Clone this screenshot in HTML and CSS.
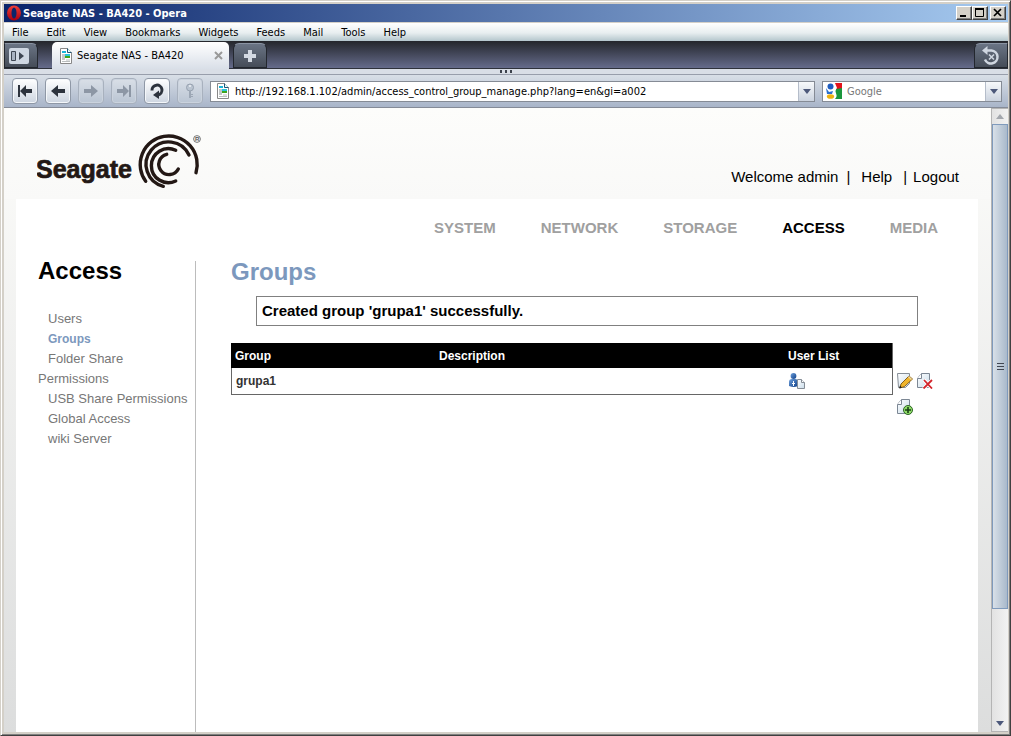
FILE: index.html
```html
<!DOCTYPE html>
<html lang="en">
<head>
<meta charset="utf-8">
<title>Seagate NAS - BA420</title>
<link rel="stylesheet" href="styles.css">
</head>
<body>
<svg class="defs" aria-hidden="true">
  <defs>
    <linearGradient id="doc-fill" x1="0" y1="0" x2="1" y2="1"><stop offset="0" stop-color="#fff"/><stop offset="1" stop-color="#c9dcea"/></linearGradient>
    <linearGradient id="blue-fill" x1="0" y1="0" x2="1" y2="1"><stop offset="0" stop-color="#6fa0dc"/><stop offset="1" stop-color="#0e3f88"/></linearGradient>
    <linearGradient id="red-fill" x1="0" y1="0" x2="0" y2="1"><stop offset="0" stop-color="#f04038"/><stop offset="1" stop-color="#a80010"/></linearGradient>
    <symbol id="page-icon" viewBox="0 0 14 16">
      <path d="M1.500.5h7l4 4v11h-11z" fill="#fff" stroke="#888"/>
      <path d="M8.500.5v4h4" fill="#dff" stroke="#257"/>
      <path d="M3 3h4v2H3z" fill="#19b5d8"/><path d="M3 6h3v6H3z" fill="#c4c8c8"/>
      <path d="M6 6h5v2H6z" fill="#25c5dc"/><path d="M6 8h5v2H6z" fill="#3fa51c"/>
      <path d="M7 12h4M3 13.500h8" stroke="#b9bdbd"/>
    </symbol>
    <symbol id="sheet" viewBox="0 0 16 16">
      <path d="M4.500.5h8v14h-12v-9z" fill="url(#doc-fill)" stroke="#7c8794"/>
      <path d="M4.500.5v5h-4" fill="#fff" stroke="#7c8794"/>
    </symbol>
  </defs>
</svg>
<div class="window">
  <header class="titlebar">
    <svg class="opera" viewBox="0 0 16 16" aria-hidden="true"><ellipse cx="8" cy="8" rx="7" ry="7.500" fill="url(#red-fill)"/><ellipse cx="8" cy="8" rx="2.500" ry="5.500" fill="#0b256b"/></svg>
    <span class="window-title">Seagate NAS - BA420 - Opera</span>
    <div class="window-buttons">
      <button type="button" aria-label="Minimize"><svg viewBox="0 0 12 10"><path d="M2 8h6" stroke="#000" stroke-width="2"/></svg></button>
      <button type="button" aria-label="Maximize"><svg viewBox="0 0 12 10"><path d="M1.500 1v7.500h8V1" fill="none" stroke="#000"/><path d="M1 1h9" stroke="#000" stroke-width="2"/></svg></button>
      <button type="button" class="close" aria-label="Close"><svg viewBox="0 0 12 10"><path d="M2 1l7 7M9 1L2 8" stroke="#000" stroke-width="1.700"/></svg></button>
    </div>
  </header>
  <nav class="menubar" aria-label="Application menu">
    <button type="button">File</button><button type="button">Edit</button><button type="button">View</button><button type="button">Bookmarks</button><button type="button">Widgets</button><button type="button">Feeds</button><button type="button">Mail</button><button type="button">Tools</button><button type="button">Help</button>
  </nav>
  <div class="tabbar">
    <button type="button" class="dark-tab panel-toggle" aria-label="Panels"><svg viewBox="0 0 20 16"><rect width="20" height="16" rx="2" fill="#cfd7e2"/><path d="M2.500 3.500h4v9h-4z" fill="#a9b3c2" stroke="#3e4652"/><path d="M10 4l5 4-5 4z" fill="#3e4652"/></svg></button>
    <div class="tab">
      <svg class="page-icon" aria-hidden="true"><use href="#page-icon"/></svg>
      <span>Seagate NAS - BA420</span>
      <button type="button" aria-label="Close tab"><svg viewBox="0 0 9 9"><path d="M1 1l7 7M8 1L1 8" stroke="#999" stroke-width="2"/></svg></button>
    </div>
    <button type="button" class="dark-tab new-tab" aria-label="New tab"><svg viewBox="0 0 14 14"><path d="M7 1v12M1 7h12" stroke="#d3d9e2" stroke-width="4"/></svg></button>
    <button type="button" class="dark-tab trash" aria-label="Closed tabs"><svg viewBox="0 0 20 20"><path d="M6 4.500h4.500a6.500 6.500 0 1 1-6.500 9" fill="none" stroke="#cfd6e0" stroke-width="2.500"/><path d="M6.500 0v9L1 4.500z" fill="#cfd6e0"/><path d="M8 8.500l5 5M13 8.500l-5 5" stroke="#cfd6e0" stroke-width="1.600"/></svg></button>
  </div>
  <div class="grip"><svg viewBox="0 0 16 4" aria-hidden="true"><path d="M2 1h2v3H2zM7 1h2v3H7zM12 1h2v3h-2z" fill="#3c424c"/></svg></div>
  <div class="toolbar">
    <div class="nav-buttons">
      <button type="button" aria-label="Rewind"><svg viewBox="0 0 16 16"><path d="M2 2v12" stroke="#2d333d" stroke-width="2"/><path d="M3 8l6-6v4h6v4H9v4z" fill="#2d333d"/></svg></button>
      <button type="button" aria-label="Back"><svg viewBox="0 0 16 16"><path d="M1 8l7-6v4h7v4H8v4z" fill="#2d333d"/></svg></button>
      <button type="button" disabled aria-label="Forward"><svg viewBox="0 0 16 16"><path d="M15 8L8 2v4H1v4h7v4z" fill="#8d97a5"/></svg></button>
      <button type="button" disabled aria-label="Fast forward"><svg viewBox="0 0 16 16"><path d="M14 2v12" stroke="#8d97a5" stroke-width="2"/><path d="M13 8L7 2v4H1v4h6v4z" fill="#8d97a5"/></svg></button>
      <button type="button" aria-label="Reload"><svg viewBox="0 0 16 16"><path d="M3 7.500a5 5 0 1 1 6 4.500" fill="none" stroke="#2d333d" stroke-width="3"/><path d="M10 7.500v8.500l-6-4z" fill="#2d333d"/></svg></button>
      <button type="button" disabled aria-label="Wand"><svg viewBox="0 0 16 16"><circle cx="8" cy="4.500" r="3.500" fill="#bac4d0" stroke="#97a2b0"/><path d="M7 8h2v7H7zM9 11h2v1H9zM9 13h2v1H9z" fill="#9ca7b5"/><circle cx="8" cy="3" r="1" fill="#eef2f6"/></svg></button>
    </div>
    <div class="field address">
      <svg class="page-icon" aria-hidden="true"><use href="#page-icon"/></svg>
      <input type="text" aria-label="Address" value="http://192.168.1.102/admin/access_control_group_manage.php?lang=en&amp;gi=a002">
      <button type="button" aria-label="Show addresses"><svg viewBox="0 0 8 5"><path d="M0 0h8L4 5z" fill="#4c587a"/></svg></button>
    </div>
    <div class="field search">
      <svg class="google" viewBox="0 0 16 16" aria-hidden="true"><path d="M8 0h8v6H10z" fill="#e2121b"/><path d="M10 6l6-1v11H9c4-4-1-6 1-10z" fill="#1b963d"/><path d="M8 0h1l2 5-3 4 2 4-2 3H7z" fill="#fff"/><circle cx="4.500" cy="3.500" r="3" fill="#1d5cc0"/><path d="M0 5l3 4 4-1-1 3H1z" fill="#2a70d0"/><ellipse cx="4.500" cy="13.500" rx="3.600" ry="2.300" fill="#eeb211"/></svg>
      <input type="text" aria-label="Search" placeholder="Google">
      <button type="button" aria-label="Choose search engine"><svg viewBox="0 0 8 5"><path d="M0 0h8L4 5z" fill="#4c587a"/></svg></button>
    </div>
  </div>
  <div class="viewport">
    <div class="page">
      <div class="page-header">
        <svg class="logo" viewBox="0 0 168 60" role="img" aria-label="Seagate">
          <text x="-1" y="48" class="logo-name">Seagate</text>
          <g fill="none" stroke="#231815" stroke-width="3.400" stroke-linecap="round">
            <path d="M108.700 51.300A28.500 28.500 0 1 1 159 42.700"/>
            <path d="M126.300 56.300A22.500 22.500 0 1 1 152 25"/>
            <path d="M138.700 51A17 17 0 1 1 138.700 20.300"/>
            <path d="M141.300 39A10.300 10.300 0 1 1 129.700 24.300"/>
          </g>
          <circle cx="160" cy="9" r="3.400" fill="none" stroke="#555" stroke-width=".8"/>
          <text x="158" y="11" class="logo-mark">R</text>
        </svg>
        <div class="account"><span>Welcome admin</span><span class="bar">|</span><a class="help" href="#">Help</a><span class="bar">|</span><a class="logout" href="#">Logout</a></div>
      </div>
      <div class="sheet">
        <nav class="sections" aria-label="Sections">
          <a href="#">SYSTEM</a><a href="#">NETWORK</a><a href="#">STORAGE</a><a href="#" class="current">ACCESS</a><a href="#">MEDIA</a>
        </nav>
        <div class="columns">
          <aside class="sidebar">
            <h2>Access</h2>
            <ul>
              <li><a href="#">Users</a></li>
              <li><a href="#" class="current">Groups</a></li>
              <li><a href="#">Folder Share Permissions</a></li>
              <li><a href="#">USB Share Permissions</a></li>
              <li><a href="#">Global Access</a></li>
              <li><a href="#">wiki Server</a></li>
            </ul>
          </aside>
          <main>
            <h1>Groups</h1>
            <p class="message" role="status">Created group 'grupa1' successfully.</p>
            <div class="listing">
              <table>
                <thead><tr><th class="col-group">Group</th><th class="col-description">Description</th><th>User List</th></tr></thead>
                <tbody><tr><td>grupa1</td><td></td><td><a href="#" aria-label="Show users"><svg class="icon" viewBox="0 0 16 16"><circle cx="4.500" cy="3" r="2.900" fill="url(#blue-fill)"/><path d="M0 13V9q0-3 3-3h3q3 0 3 3v4q-4 2-9 0z" fill="url(#blue-fill)"/><path d="M4.500 8v5M3 10.500h3" stroke="#fff"/><path d="M8.500 6.500h4l3 3v6h-7z" fill="url(#doc-fill)" stroke="#858d96"/><path d="M12.500 6.500v3h3" fill="#fff" stroke="#858d96"/></svg></a></td></tr></tbody>
              </table>
              <div class="actions">
                <a href="#" aria-label="Edit group"><svg class="icon" viewBox="0 0 16 16"><path d="M.5.5h12v10l-4 4h-7z" fill="url(#doc-fill)" stroke="#858d96"/><path d="M3 15l1-4 8-8 3.500 3-8 7.500z" fill="#f0b52c" stroke="#88601a"/><path d="M11 4l1-1 3 3-1 1z" fill="#e9d8a6"/><path d="M2 15.500l1-3 2 2z" fill="#222"/></svg></a>
                <a href="#" aria-label="Delete group"><svg class="icon" viewBox="0 0 16 16"><use href="#sheet"/><path d="M7 7l8 8.500M15 7l-8.500 8.500" stroke="#fff" stroke-width="3.500"/><path d="M7 7l8 8.500M15 7l-8.500 8.500" stroke="#d2232a" stroke-width="1.800"/></svg></a>
                <a href="#" aria-label="Add group"><svg class="icon" viewBox="0 0 16 16"><use href="#sheet"/><circle cx="11" cy="11" r="4.500" fill="#8fdb68" stroke="#2d6426"/><path d="M11 8v6M8 11h6" stroke="#173f13" stroke-width="1.600"/></svg></a>
              </div>
            </div>
          </main>
        </div>
      </div>
    </div>
    <div class="scrollbar" aria-hidden="true">
      <span class="arrow"><svg viewBox="0 0 8 5"><path d="M0 5h8L4 0z" fill="#a3a7ad"/></svg></span>
      <span class="thumb"></span>
      <span class="track"></span>
      <span class="arrow"><svg viewBox="0 0 8 5"><path d="M0 0h8L4 5z" fill="#4c587a"/></svg></span>
    </div>
  </div>
</div>
</body>
</html>
```
FILE: styles.css
```css
* { box-sizing: border-box; }
body { margin: 0; font: 11px "DejaVu Sans Condensed", "DejaVu Sans", sans-serif; color: #000; }
button { font: inherit; color: inherit; margin: 0; padding: 0; border: 0; background: none; display: flex; align-items: center; justify-content: center; flex: none; }
a { color: inherit; text-decoration: none; }
svg { display: block; flex: none; }
.defs { position: absolute; width: 0; height: 0; }

.window {
  height: 100vh; display: flex; flex-direction: column;
  border: 1px solid #d4d0c8; border-right-color: #404040; border-bottom-color: #404040;
  background: #d4d0c8;
  box-shadow: inset 1px 1px #fff, inset -1px -1px #808080;
  padding: 3px 2px 3px 3px;
}

.titlebar { flex: none; height: 18px; display: flex; align-items: center; padding: 0 2px; background: linear-gradient(90deg, #0a246a, #a6caf0); }
.opera { width: 16px; height: 16px; }
.window-title { color: #fff; font-weight: bold; flex: 1; padding-left: 1px; }
.window-buttons { display: flex; }
.window-buttons button { width: 16px; height: 14px; background: #d4d0c8; border: 1px solid; border-color: #fff #404040 #404040 #fff; box-shadow: inset -1px -1px #808080; }
.window-buttons .close { margin-left: 2px; }
.window-buttons svg { width: 12px; height: 10px; }

.menubar { flex: none; height: 19px; display: flex; gap: 18px; padding-left: 8px; border-top: 1px solid #d4d0c8; background: linear-gradient(#fff, #e8eef0 55%, #b4c6cc); }

.tabbar { flex: none; height: 28px; display: flex; align-items: flex-end; background: linear-gradient(#24262b, #3e4252 40%, #656b8b); border-bottom: 1px solid #2e323b; }
.dark-tab { height: 25px; background: linear-gradient(#6a7484, #454c58); border: 1px solid #23272e; border-top-color: #8a93a2; }
.panel-toggle { width: 34px; padding-right: 4px; border-radius: 0 6px 0 0; }
.panel-toggle svg { width: 20px; height: 16px; }
.tab { height: 27px; width: 177px; margin-left: 14px; margin-bottom: -1px; display: flex; align-items: center; gap: 4px; padding: 0 6px 0 7px; border-radius: 5px 5px 0 0; background: linear-gradient(#fff, #d9dfe8); }
.tab span { flex: 1; white-space: nowrap; }
.tab svg:not(.page-icon) { width: 9px; height: 9px; }
.page-icon { width: 14px; height: 16px; }
.new-tab { width: 34px; margin-left: 4px; border-radius: 6px 6px 0 0; }
.new-tab svg { width: 14px; height: 14px; }
.trash { width: 34px; margin-left: auto; border-radius: 6px 0 0 0; }
.trash svg { width: 20px; height: 20px; }

.grip { flex: none; height: 6px; background: #d9dee6; border-bottom: 1px solid #989eab; display: flex; justify-content: center; }
.grip svg { width: 16px; height: 4px; }

.toolbar { flex: none; height: 33px; display: flex; align-items: center; gap: 7px; padding: 0 6px 0 8px; background: linear-gradient(#d9dfe7, #a9b5c9); border-bottom: 1px solid #858b97; }
.nav-buttons { display: flex; gap: 7px; }
.nav-buttons button { width: 26px; height: 26px; border: 1px solid #8f98a6; border-radius: 4px; background: linear-gradient(#fff, #cdd5e0); box-shadow: inset 0 0 0 1px #f4f7fa; }
.nav-buttons button:disabled { border-color: #a8b1be; background: linear-gradient(#d9dfe7, #bac5d3); box-shadow: inset 0 0 0 1px #cbd3de; }
.nav-buttons svg { width: 16px; height: 16px; }
.field { height: 21px; display: flex; align-items: center; background: #fff; border: 1px solid #858b95; }
.address { flex: 1; padding-left: 5px; }
.search { width: 180px; padding-left: 3px; }
.google { width: 16px; height: 16px; }
.field input { flex: 1; min-width: 0; height: 19px; border: 0; outline: 0; padding: 0 5px; font: inherit; background: none; }
.field input::placeholder { color: #777; opacity: 1; }
.field button { width: 16px; height: 19px; border-left: 1px solid #b5bdca; background: linear-gradient(#f7f9fb, #cbd3df); }
.field button svg, .arrow svg { width: 8px; height: 5px; }

.viewport { flex: 1; min-height: 0; display: flex; }
.page { flex: 1; min-width: 0; overflow: hidden; display: flex; flex-direction: column; padding: 0 13px 0 12px; background: linear-gradient(#fdfdfb, #dcdddd); font-family: "Liberation Sans", Arial, sans-serif; }
.page-header { flex: none; height: 91px; margin: 0 -13px 0 -12px; padding: 22px 32px 0 33px; display: flex; justify-content: space-between; background: linear-gradient(#fdfdfb, #f9f9f8); }
.logo { width: 168px; height: 60px; }
.logo-name { font: bold 25px "Liberation Sans", Arial, sans-serif; fill: #231815; stroke: #231815; stroke-width: .7px; }
.logo-mark { font: bold 6px "Liberation Sans", Arial, sans-serif; fill: #555; }
.account { display: flex; font-size: 15px; line-height: 20px; padding-top: 37px; }
.bar { padding-left: 8px; }
.help { padding: 0 3px 0 11px; }
.logout { padding-left: 6px; }

.sheet { flex: 1; display: flex; flex-direction: column; background: #fff; }
.sections { display: flex; justify-content: flex-end; gap: 45px; padding: 19px 40px 0 0; font-size: 15px; line-height: 20px; font-weight: bold; color: #a0a0a0; }
.sections .current { color: #000; }
.columns { flex: 1; display: flex; padding-top: 23px; }
.sidebar { width: 180px; flex: none; padding: 0 7px 0 22px; border-right: 1px solid #bcbcbc; }
h1, h2 { margin: 0; font-size: 24px; line-height: 20px; }
h1 { color: #7c98bd; padding-top: 1px; }
.sidebar ul { list-style: none; margin: 28px 0 0; padding: 0; font-size: 13px; line-height: 20px; color: #777; text-indent: 10px; }
.sidebar .current { color: #7c98bd; font-size: 12px; font-weight: bold; }
main { flex: 1; min-width: 0; padding: 0 45px 0 35px; }
.message { margin: 14px 15px 17px 25px; padding: 4px 5px; border: 1px solid #808080; font-size: 15px; line-height: 20px; font-weight: bold; }
.listing { display: flex; align-items: flex-start; gap: 4px; }
table { flex: 1; border-collapse: separate; border-spacing: 0; border: 1px solid #666; border-top: 0; font-size: 12px; font-weight: bold; color: #333; table-layout: fixed; }
thead { box-shadow: -1px 0 #000; }
th { background: #000; color: #fff; text-align: left; height: 25px; padding: 0 3px; }
td { height: 26px; padding: 0 4px; }
.col-group { width: 204px; }
.col-description { width: 349px; }
.icon { width: 16px; height: 16px; }
.actions { width: 36px; padding-top: 30px; display: grid; grid-template-columns: 16px 16px; gap: 10px 4px; }

.scrollbar { width: 17px; flex: none; display: flex; flex-direction: column; background: linear-gradient(90deg, #e2e2e2, #f2f2f2); border: 1px solid #b4b4b4; border-right: 0; }
.arrow { height: 15px; flex: none; display: flex; align-items: center; justify-content: center; }
.thumb { flex: 485; border: 1px solid #7f9abc; background: linear-gradient(#404652, #404652) center / 7px 1px no-repeat, linear-gradient(#404652, #404652) center calc(50% - 3px) / 7px 1px no-repeat, linear-gradient(#404652, #404652) center calc(50% + 3px) / 7px 1px no-repeat, linear-gradient(90deg, #d8e0e8, #a9b9cb); }
.track { flex: 107; }
```
